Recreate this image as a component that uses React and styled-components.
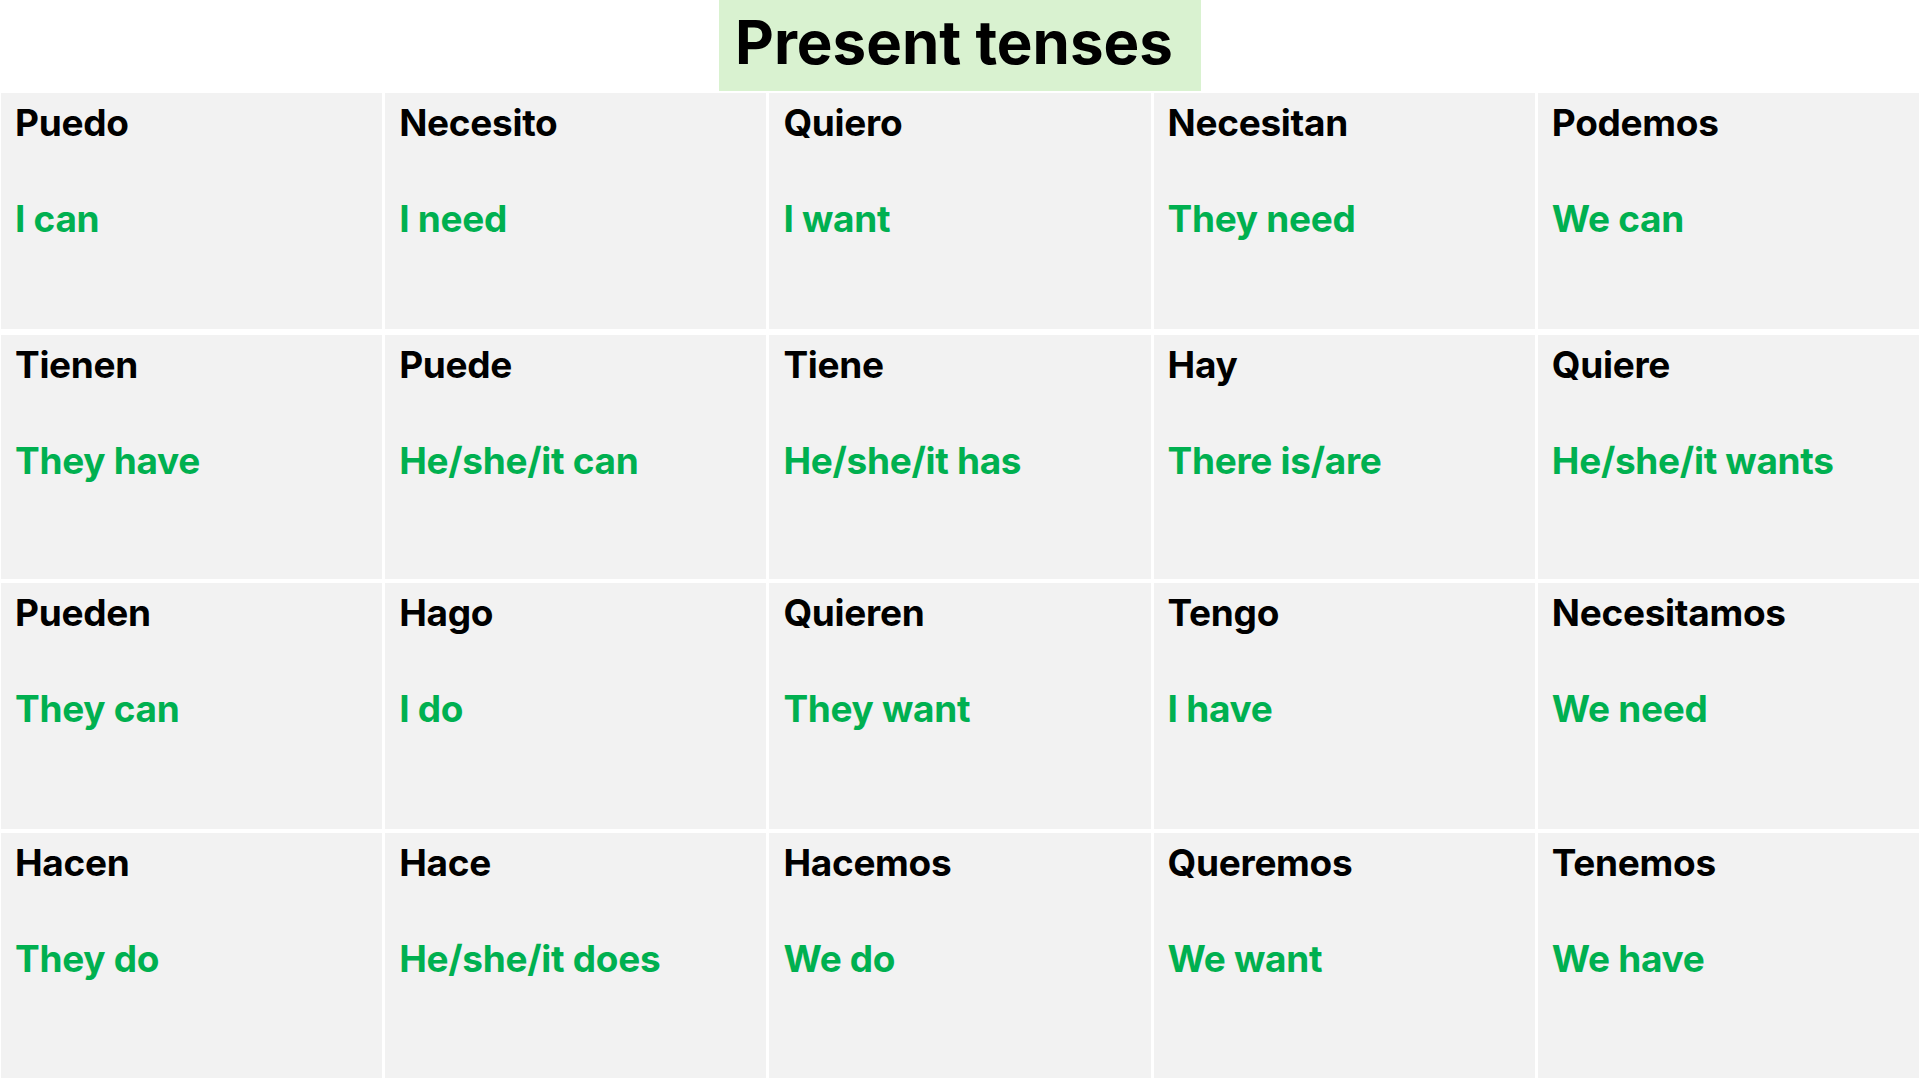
import React from "react";
import styled, { createGlobalStyle } from "styled-components";

const Global = createGlobalStyle`
  html, body { margin: 0; padding: 0; background: #ffffff; }
  body { font-family: Inter, "Liberation Sans", sans-serif; }
`;

const Page = styled.div`
  width: 1920px;
  height: 1080px;
  display: flex;
  flex-direction: column;
  overflow: hidden;
`;

const TitleBar = styled.div`
  display: flex;
  justify-content: center;
  height: 91px;
  margin-bottom: 2px;
`;

const Title = styled.h1`
  margin: 0;
  width: 482px;
  box-sizing: border-box;
  padding: 6px 0 0 16px;
  background: #d9f2d0;
  color: #000;
  font-size: 60px;
  font-weight: 700;
  line-height: 1.2;
  letter-spacing: 0;
`;

const Table = styled.div`
  display: flex;
  flex-direction: column;
  gap: 4px;
  padding: 0 1px;
`;

const Row = styled.div`
  display: grid;
  grid-template-columns: repeat(5, 1fr);
  column-gap: 3px;
  height: ${p => p.h}px;
  margin-bottom: ${p => (p.first ? 2 : 0)}px;
`;

const Cell = styled.div`
  background: #f2f2f2;
  padding: 8px 14px 0;
  display: flex;
  flex-direction: column;
  gap: 52px;
`;

const Word = styled.div`
  font-size: 37px;
  font-weight: 700;
  line-height: 44px;
  letter-spacing: -0.3px;
  color: ${p => (p.green ? "#00b050" : "#000000")};
  white-space: nowrap;
`;

const rows = [
  {
    h: 236,
    items: [
      ["Puedo", "I can"],
      ["Necesito", "I need"],
      ["Quiero", "I want"],
      ["Necesitan", "They need"],
      ["Podemos", "We can"],
    ],
  },
  {
    h: 244,
    items: [
      ["Tienen", "They have"],
      ["Puede", "He/she/it can"],
      ["Tiene", "He/she/it has"],
      ["Hay", "There is/are"],
      ["Quiere", "He/she/it wants"],
    ],
  },
  {
    h: 246,
    items: [
      ["Pueden", "They can"],
      ["Hago", "I do"],
      ["Quieren", "They want"],
      ["Tengo", "I have"],
      ["Necesitamos", "We need"],
    ],
  },
  {
    h: 245,
    items: [
      ["Hacen", "They do"],
      ["Hace", "He/she/it does"],
      ["Hacemos", "We do"],
      ["Queremos", "We want"],
      ["Tenemos", "We have"],
    ],
  },
];

export default function App() {
  return (
    <Page>
      <Global />
      <TitleBar>
        <Title>Present tenses</Title>
      </TitleBar>
      <Table>
        {rows.map((r, i) => (
          <Row key={i} h={r.h} first={i === 0}>
            {r.items.map(([es, en]) => (
              <Cell key={es}>
                <Word>{es}</Word>
                <Word green>{en}</Word>
              </Cell>
            ))}
          </Row>
        ))}
      </Table>
    </Page>
  );
}
